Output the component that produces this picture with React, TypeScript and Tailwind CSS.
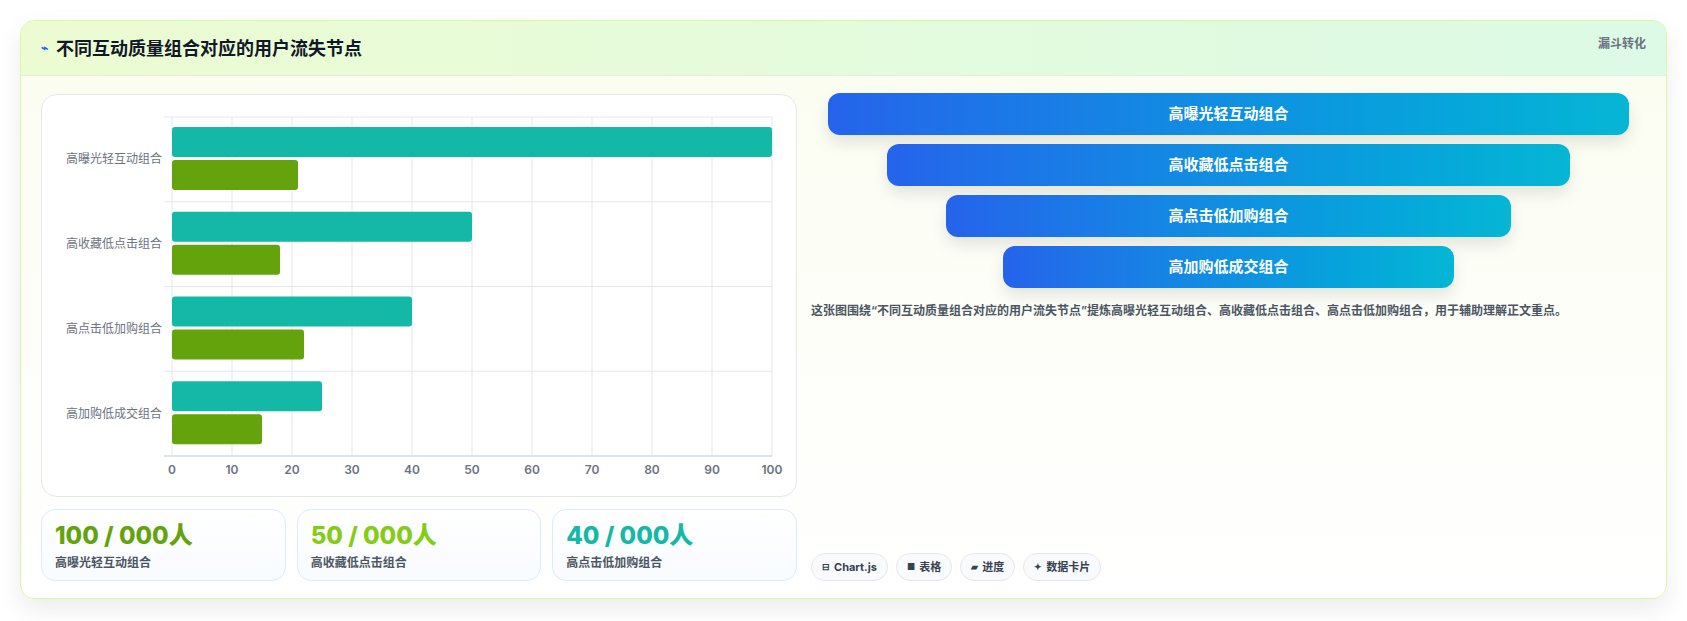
import React from "react";

const cats = ["高曝光轻互动组合", "高收藏低点击组合", "高点击低加购组合", "高加购低成交组合"];
const a = [100, 50, 40, 25];
const b = [21, 18, 22, 15];

function Chart() {
  const L = 130, R = 730, T = 22, B = 361;
  const sx = (v: number) => L + ((R - L) * v) / 100;
  const rowH = (B - T) / 4;
  return (
    <svg width="756" height="403" viewBox="0 0 756 403" style={{ fontFamily: "Inter, 'Noto Sans CJK SC', sans-serif" }}>
      {Array.from({ length: 11 }).map((_, i) => (
        <line key={i} x1={sx(i * 10)} x2={sx(i * 10)} y1={T} y2={B} stroke="#e5e7eb" strokeWidth="1" />
      ))}
      {[0, 1, 2, 3, 4].map((i) => (
        <line key={i} x1={L - 8} x2={R} y1={T + rowH * i} y2={T + rowH * i} stroke="#e5e7eb" />
      ))}
      <line x1={L - 8} x2={R} y1={B} y2={B} stroke="#cbd5e1" />
      {cats.map((c, i) => {
        const y0 = T + rowH * i;
        return (
          <g key={c}>
            <rect x={L} y={y0 + 10} width={sx(a[i]) - L} height={30} rx={3} fill="#14b8a6" />
            <rect x={L} y={y0 + 43} width={sx(b[i]) - L} height={30} rx={3} fill="#65a30d" />
            <text x={L - 10} y={y0 + rowH / 2 + 4} textAnchor="end" fontSize="12" fill="#6b7280">{c}</text>
          </g>
        );
      })}
      {Array.from({ length: 11 }).map((_, i) => (
        <text key={i} x={sx(i * 10)} y={379} textAnchor="middle" fontSize="12" fontWeight="600" fill="#6b7280">{i * 10}</text>
      ))}
    </svg>
  );
}

const stats = [
  { v: "100 / 000人", l: "高曝光轻互动组合", c: "text-[#65a30d]" },
  { v: "50 / 000人", l: "高收藏低点击组合", c: "text-[#84cc16]" },
  { v: "40 / 000人", l: "高点击低加购组合", c: "text-[#14b8a6]" },
];

const funnel = [
  { t: "高曝光轻互动组合", w: "w-[96%]" },
  { t: "高收藏低点击组合", w: "w-[81.7%]" },
  { t: "高点击低加购组合", w: "w-[67.7%]" },
  { t: "高加购低成交组合", w: "w-[54%]" },
];

const tags = [
  { i: "⊟", t: "Chart.js" },
  { i: "■", t: "表格" },
  { i: "▰", t: "进度" },
  { i: "✦", t: "数据卡片" },
];

export default function App() {
  return (
    <div className="w-[1687px] h-[621px] bg-white pt-5 px-5" style={{ fontFamily: "Inter, 'Noto Sans CJK SC', sans-serif" }}>
      <div className="w-[1647px] h-[579px] rounded-[14px] border border-[#d9f99d] overflow-hidden shadow-[0_10px_24px_rgba(0,0,0,0.08)] flex flex-col bg-gradient-to-b from-[#fbfdf0] to-white">
        <div className="h-[55px] shrink-0 flex justify-between border-b border-[#e2efd9] bg-gradient-to-r from-[#ecfcd2] to-[#dcfae6] px-5">
          <div className="flex items-center gap-2 text-[18px] font-bold text-[#111827]">
            <span className="text-[12px] text-[#2563eb]">⌁</span>
            不同互动质量组合对应的用户流失节点
          </div>
          <div className="pt-[14px] text-[12px] font-bold text-[#6b7280]">漏斗转化</div>
        </div>
        <div className="flex-1 grid grid-cols-[756px_1fr] gap-[14px] px-5 pt-[18px] pb-[18px]">
          <div className="flex flex-col gap-3">
            <div className="h-[403px] rounded-[16px] border border-[#e5e7eb] bg-white overflow-hidden">
              <Chart />
            </div>
            <div className="grid grid-cols-3 gap-[11px] h-[72px]">
              {stats.map((s) => (
                <div key={s.l} className="rounded-[14px] border border-[#dbeafe] bg-gradient-to-b from-white to-[#f8fbff] px-[13px] pt-[10px]">
                  <div className={`text-[24px] font-extrabold leading-[32px] ${s.c}`}>{s.v}</div>
                  <div className="text-[12px] font-semibold text-[#4b5563] mt-[2px]">{s.l}</div>
                </div>
              ))}
            </div>
          </div>
          <div className="flex flex-col pr-0">
            <div className="flex flex-col items-center gap-[9px] mt-[-1px]">
              {funnel.map((f) => (
                <div key={f.t} className={`${f.w} h-[42px] rounded-[12px] bg-gradient-to-r from-[#2563eb] to-[#06b6d4] shadow-[0_8px_16px_rgba(0,0,0,0.1)] flex items-center justify-center text-white font-bold text-[15px]`}>
                  {f.t}
                </div>
              ))}
            </div>
            <div className="mt-[14px] text-[12px] font-semibold text-[#4b5563]">
              这张图围绕“不同互动质量组合对应的用户流失节点”提炼高曝光轻互动组合、高收藏低点击组合、高点击低加购组合，用于辅助理解正文重点。
            </div>
            <div className="mt-auto flex gap-2">
              {tags.map((t) => (
                <div key={t.t} className="h-[28px] px-[10px] rounded-full border border-[#e5e7eb] bg-[#f8fafc] flex items-center gap-1 text-[11px] font-bold text-[#374151]">
                  <span className="text-[9px]">{t.i}</span>{t.t}
                </div>
              ))}
            </div>
          </div>
        </div>
      </div>
    </div>
  );
}
